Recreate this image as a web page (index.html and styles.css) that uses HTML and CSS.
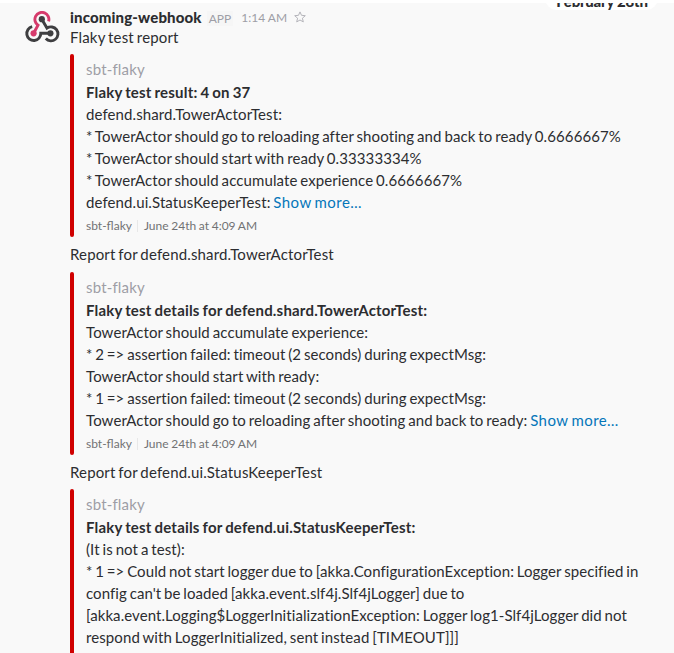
FILE: index.html
```
<!DOCTYPE html>
<html lang="en">
<head>
<meta charset="utf-8">
<title>incoming-webhook</title>
<link rel="stylesheet" href="styles.css">
</head>
<body>
<div class="date-divider"><span class="date-label">February 28th</span></div>
<main class="message">
  <svg class="avatar" viewBox="0 0 36 36" fill="none" stroke-width="2.9">
    <path stroke="#3f3f41" d="M8.2 15.7A7 7 0 1 0 16.8 22.3H26.4M17.8 8.2L23 17.1A7 7 0 1 1 21.8 27.6"/>
    <path stroke="#d63b6c" d="M24.6 10.4A7 7 0 1 0 14 14.2L9.6 22.3"/>
    <circle cx="17.8" cy="8.2" r="3.1" fill="#3f3f41"/>
    <circle cx="26.4" cy="22.3" r="3.1" fill="#3f3f41"/>
    <circle cx="9.6" cy="22.3" r="3.1" fill="#d63b6c"/>
  </svg>
  <div class="content">
    <header class="meta">
      <b class="sender">incoming-webhook</b>
      <span class="app">APP</span>
      <span class="time">1:14 AM</span>
      <svg class="star" viewBox="0 0 12 12"><path d="M6 .9L7.5 4.3 11.3 4.7 8.4 7.2 9.3 10.9 6 9 2.7 10.9 3.6 7.2.7 4.7 4.5 4.3Z"/></svg>
    </header>
    <p class="lead">Flaky test report</p>
    <section class="attachment">
      <p class="author">sbt-flaky</p>
      <h2>Flaky test result: 4 on 37</h2>
      <p>defend.shard.TowerActorTest:<br>
      * TowerActor should go to reloading after shooting and back to ready 0.6666667%<br>
      * TowerActor should start with ready 0.33333334%<br>
      * TowerActor should accumulate experience 0.6666667%<br>
      defend.ui.StatusKeeperTest: <a>Show more…</a></p>
      <footer><span>sbt-flaky</span><time>June 24th at 4:09 AM</time></footer>
    </section>
    <p class="report">Report for defend.shard.TowerActorTest</p>
    <section class="attachment">
      <p class="author">sbt-flaky</p>
      <h2>Flaky test details for defend.shard.TowerActorTest:</h2>
      <p>TowerActor should accumulate experience:<br>
      <span class="tight">* 2 =&gt; assertion failed: timeout (2 seconds) during expectMsg:</span><br>
      TowerActor should start with ready:<br>
      <span class="tight">* 1 =&gt; assertion failed: timeout (2 seconds) during expectMsg:</span><br>
      TowerActor should go to reloading after shooting and back to ready: <a>Show more…</a></p>
      <footer><span>sbt-flaky</span><time>June 24th at 4:09 AM</time></footer>
    </section>
    <p class="report last">Report for defend.ui.StatusKeeperTest</p>
    <section class="attachment">
      <p class="author">sbt-flaky</p>
      <h2>Flaky test details for defend.ui.StatusKeeperTest:</h2>
      <p>(It is not a test):<br>
      <span class="tight">* 1 =&gt; Could not start logger due to [akka.ConfigurationException: Logger specified in</span><br>
      <span class="tight">config can't be loaded [akka.event.slf4j.Slf4jLogger] due to</span><br>
      <span class="tight">[akka.event.Logging$LoggerInitializationException: Logger log1-Slf4jLogger did not</span><br>
      respond with LoggerInitialized, sent instead [TIMEOUT]]]</p>
    </section>
  </div>
</main>
</body>
</html>
```
FILE: styles.css
```
* { box-sizing: border-box; margin: 0; padding: 0; }
html, body { height: 653px; overflow: hidden; }
body {
  position: relative;
  background: #f9f9f9;
  border-top: 3px solid #fff;
  color: #2c2d30;
  font: 15px/22px Lato, sans-serif;
}
.date-divider {
  position: absolute;
  top: -17px;
  right: 16px;
  width: 113px;
  height: 24px;
  padding: 4px 0 0 1px;
  border-radius: 12px;
  background: #fff;
  text-align: center;
}
.date-label { display: block; font-weight: 900; line-height: 22px; letter-spacing: -0.25px; }
.message { display: flex; padding: 4px 0 0 24px; }
.avatar { width: 36px; height: 36px; margin-top: 4px; flex: none; }
.content { margin-left: 10px; flex: 1; white-space: nowrap; }
.meta { display: flex; align-items: center; height: 20px; }
.sender { font-weight: 900; letter-spacing: 0.14px; }
.app { margin: 2px 0 0 5px; padding: 1px 2px; background: #f6f6f6; color: #9e9ea6; font-size: 12px; line-height: 13px; }
.time { margin: 2px 0 0 8px; color: #9e9ea6; font-size: 12px; }
.star { width: 12px; height: 12px; margin-left: 7px; fill: none; stroke: #b4b4ba; }
p { letter-spacing: 0.1px; word-spacing: -1.1px; }
.lead { line-height: 20px; margin-bottom: 7px; letter-spacing: 0.17px; }
.attachment { position: relative; height: 183px; padding: 5px 0 0 16px; }
.attachment::before {
  content: "";
  position: absolute;
  inset: 0 auto 0 0;
  width: 4px;
  border-radius: 2px;
  background: #d00000;
}
.author { margin-top: -1px; margin-bottom: 1px; color: #9e9ea6; letter-spacing: 0.17px; }
h2 { font-size: 15px; line-height: 22px; font-weight: 700; letter-spacing: 0.19px; word-spacing: -0.9px; }
a { color: #0576b9; letter-spacing: 0.45px; }
.tight { letter-spacing: 0.07px; }
footer { display: flex; align-items: center; padding-top: 2px; color: #717274; font-size: 12px; }
time { margin-left: 5px; padding-left: 6px; border-left: 1px solid #e8e8e8; line-height: 12px; word-spacing: -0.4px; }
.report { height: 35px; padding-top: 6px; line-height: 22px; letter-spacing: 0.15px; }
.last { height: 34px; }
```
